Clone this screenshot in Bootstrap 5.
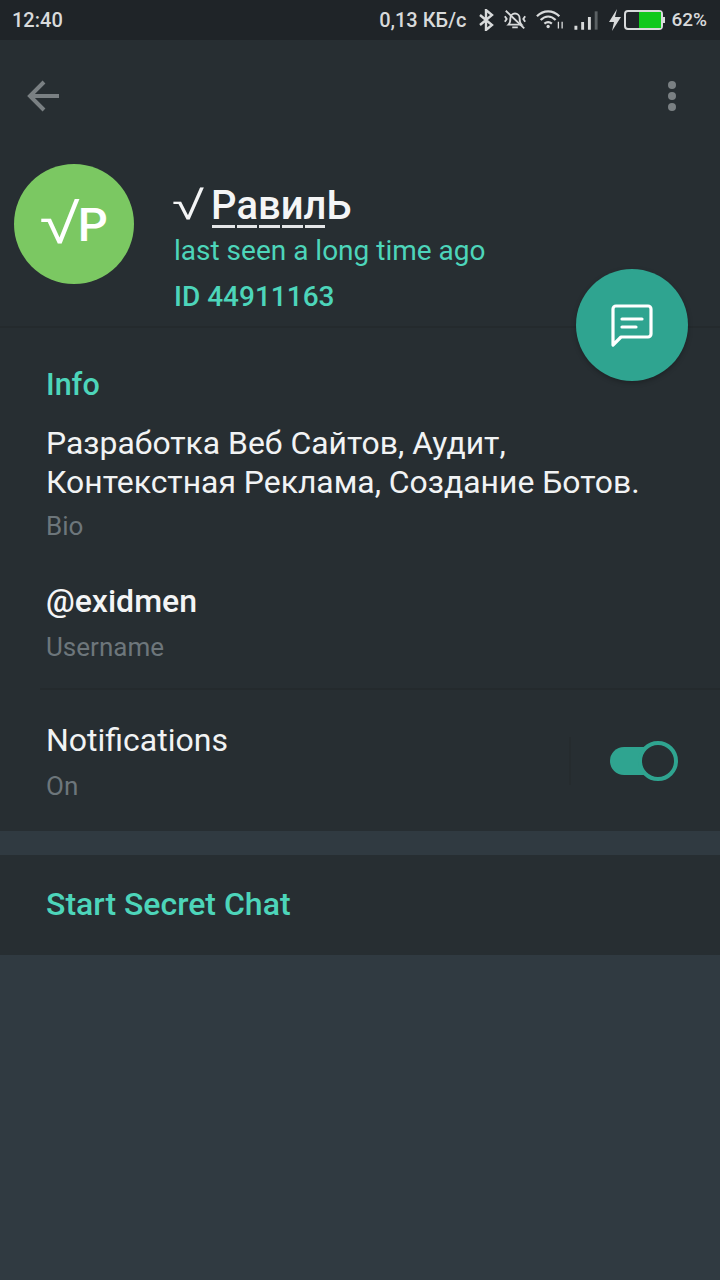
<!DOCTYPE html>
<html lang="ru">
<head>
<meta charset="utf-8">
<link rel="stylesheet" href="https://cdn.jsdelivr.net/npm/bootstrap@5.3.0/dist/css/bootstrap.min.css">
<style>
html,body{height:100%}
body{background:#303a41;font-family:Roboto,"Liberation Sans",sans-serif;color:#fff;width:720px;overflow:hidden}
.shell{height:1280px;position:relative}
.sbar{height:40px;background:#1f2428;color:#d8dadb;font-size:20px;font-weight:500;padding:0 13px 0 12px;line-height:40px}
.sicons{gap:9px}
.kb{margin-right:3px}
.sicons .pct{font-size:19px;margin-left:-4px}
.head{background:#272e32;height:288px;border-bottom:2px solid #242a2d}
.tbar{height:112px;padding:0 26px}
.dots{margin-right:16px}
.prof{padding-left:14px;height:120px;margin-top:12px}
.ava{width:120px;height:120px;border-radius:50%;background:#7bc862;font-size:47px;line-height:1;font-weight:500}
.ava .rt{font-family:"Liberation Sans",sans-serif;font-size:56px;line-height:1;font-weight:400;display:inline-block;transform:translateX(4px) scaleX(1.3);margin:0 7px 0 0}
.who{margin-left:40px;padding-top:17px}
.nm{font-size:40px;line-height:50px;font-weight:500;color:#f4f5f6;margin:0;white-space:nowrap}
.ck{font-weight:400;font-family:"Liberation Sans",sans-serif;font-size:40px;line-height:40px;display:inline-block;transform:scaleX(1.45);margin:0 2px 0 3px}
.du{position:relative;display:inline-block}
.du::after{content:"";position:absolute;left:1px;right:1px;bottom:3px;height:3px;background:#e4e6e8}
.seen{font-size:28px;line-height:30px;color:#4dd5ba;margin-top:5px}
.uid{font-size:28px;line-height:32px;font-weight:500;color:#4dd5ba;margin-top:15px}
.fab{position:absolute;left:576px;top:269px;width:112px;height:112px;border-radius:50%;background:#2fa490;box-shadow:0 2px 5px rgba(0,0,0,.25)}
.fab svg{margin-top:2px}
.info{background:#272e32;height:503px;padding-left:46px}
.ttl{font-size:30.500px;font-weight:500;color:#4dd5ba;line-height:36px;padding-top:39px;height:74px;margin:0 0 22px}
.body1{font-size:31.900px;line-height:39px;color:#f1f3f4;margin:0;white-space:nowrap}
.sub{font-size:26px;line-height:30px;color:#6d767b;margin:0}
.bio{margin-top:9px}
.usr{font-size:32px;font-weight:500;line-height:36px;color:#f4f5f6;margin:42px 0 0}
.usub{margin-top:13px}
.rule{height:2px;background:#242a2d;margin:26px 0 0 -6px}
.ntf{padding-top:31px;padding-right:43px}
.nl{font-size:32px;line-height:38px;color:#f1f3f4;margin:0}
.osub{margin-top:12px}
.tgl{position:relative;width:68px;height:40px}
.trk{position:absolute;left:1px;top:6px;width:51px;height:28px;border-radius:14px;background:#2fa490}
.knb{position:absolute;left:29px;top:0;width:40px;height:40px;border-radius:50%;background:#272e32;border:4px solid #2fa490}
.sep{width:2px;height:48px;background:#252b2e;margin-right:38px}
.gapb{height:24px}
.sec{background:#272e32;height:100px;padding-left:46px;font-size:32px;font-weight:500;color:#4dd5ba;line-height:98px}
</style>
</head>
<body>
<div class="shell">
  <div class="sbar d-flex justify-content-between align-items-center">
    <span>12:40</span>
    <div class="d-flex align-items-center sicons">
      <span class="kb">0,13 КБ/с</span>
      <svg width="16" height="22" viewBox="0 0 16 22" fill="none" stroke="#d8dadb" stroke-width="2.4"><path d="M2 6l12 10-6 5V1l6 5L2 16"/></svg>
      <svg width="24" height="24" viewBox="0 0 26 24" fill="none" stroke="#d8dadb" stroke-width="2"><path d="M6 17c2-2 2-4 2-7a5 5 0 0 1 10 0c0 3 0 5 2 7z"/><path d="M10 20h6M3 2l20 19M2 8l2 3-2 3M24 8l-2 3 2 3"/></svg>
      <svg width="28" height="22" viewBox="0 0 30 22" fill="none" stroke="#d8dadb" stroke-width="2.4"><path d="M1 7c7-7 17-7 24 0M5 11c5-5 11-5 16 0M9 15c3-2.500 5-2.500 8 0"/><circle cx="13" cy="18" r="1.800" fill="#d8dadb" stroke="none"/><path d="M24 13v7M28 13v7" stroke-width="1.400"/></svg>
      <svg width="27" height="22" viewBox="0 0 28 22" stroke-width="3" fill="none"><path d="M3 21v-4M10 21v-8M17 21V8" stroke="#d8dadb"/><path d="M24 21V2" stroke="#5b6164"/></svg>
      <div class="d-flex align-items-center" style="gap:3px">
      <svg width="12" height="22" viewBox="0 0 12 22"><path d="M8 0L0 13h5l-2 9 9-14H6z" fill="#d8dadb"/></svg>
      <svg width="42" height="22" viewBox="0 0 42 22"><rect x="1" y="2" width="37" height="18" rx="3" fill="none" stroke="#d8dadb" stroke-width="2"/><rect x="15" y="3" width="22" height="16" fill="#10c91c"/><rect x="39" y="8" width="2" height="6" fill="#d8dadb"/></svg>
      </div>
      <span class="pct">62%</span>
    </div>
  </div>
  <div class="head">
    <div class="tbar d-flex justify-content-between align-items-center">
      <svg width="36" height="32" viewBox="0 0 36 32" fill="none" stroke="#7a8083" stroke-width="4"><path d="M33 16H4M18 2L4 16l14 14"/></svg>
      <svg width="12" height="36" viewBox="0 0 12 36" fill="#7a8083" class="dots"><circle cx="6" cy="7" r="4"/><circle cx="6" cy="18" r="4"/><circle cx="6" cy="29" r="4"/></svg>
    </div>
    <div class="prof d-flex">
      <div class="ava d-flex align-items-center justify-content-center"><span class="rt">√</span>P</div>
      <div class="who">
        <p class="nm"><span class="ck">√</span> <span class="du">Р</span><span class="du">а</span><span class="du">в</span><span class="du">и</span><span class="du">л</span>Ь</p>
        <div class="seen">last seen a long time ago</div>
        <div class="uid">ID 44911163</div>
      </div>
    </div>
  </div>
  <div class="fab d-flex align-items-center justify-content-center">
    <svg width="46" height="46" viewBox="0 0 46 46" fill="none" stroke="#fff" stroke-width="3.200" stroke-linejoin="round" stroke-linecap="round"><path d="M7 7a3 3 0 0 1 3-3h32a3 3 0 0 1 3 3v25a3 3 0 0 1-3 3H15l-8 8z" transform="translate(-3 -1)"/><path d="M13 16h20M13 24h14"/></svg>
  </div>
  <div class="info">
    <p class="ttl">Info</p>
    <p class="body1">Разработка Веб Сайтов, Аудит,<br>Контекстная Реклама, Создание Ботов.</p>
    <p class="sub bio">Bio</p>
    <p class="usr">@exidmen</p>
    <p class="sub usub">Username</p>
    <div class="rule"></div>
    <div class="ntf d-flex justify-content-between align-items-center">
      <div>
        <p class="nl">Notifications</p>
        <p class="sub osub">On</p>
      </div>
      <div class="d-flex align-items-center">
        <div class="sep"></div>
        <div class="tgl"><div class="trk"></div><div class="knb"></div></div>
      </div>
    </div>
  </div>
  <div class="gapb"></div>
  <div class="sec">Start Secret Chat</div>
</div>
<script src="https://cdn.jsdelivr.net/npm/bootstrap@5.3.0/dist/js/bootstrap.bundle.min.js"></script>
</body>
</html>
